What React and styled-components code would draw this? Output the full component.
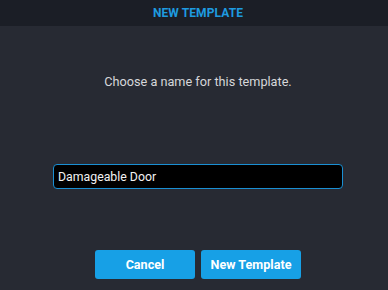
import React from "react";
import styled, { createGlobalStyle } from "styled-components";

const GlobalStyle = createGlobalStyle`
  html, body {
    margin: 0;
    padding: 0;
    background: #272a33;
    font-family: Roboto, "Liberation Sans", sans-serif;
  }
`;

const Dialog = styled.div`
  width: 388px;
  height: 290px;
  display: flex;
  flex-direction: column;
  background: #272a33;
  overflow: hidden;
`;

const Header = styled.div`
  height: 26px;
  flex: none;
  background: #1b1e26;
  display: flex;
  align-items: center;
  justify-content: center;
  padding-left: 8px;
  color: #1e9be0;
  font-weight: 700;
  font-size: 12px;
  letter-spacing: 0.1px;
`;

const Body = styled.div`
  flex: 1;
  display: flex;
  flex-direction: column;
  align-items: center;
  padding: 48px 45px 11px 53px;
`;

const Message = styled.p`
  margin: 0;
  font-size: 12.7px;
  line-height: 16px;
  color: #d6d7da;
`;

const NameInput = styled.input`
  box-sizing: border-box;
  margin-top: 74px;
  width: 290px;
  height: 25px;
  padding: 0 4px;
  background: #000;
  border: 1px solid #1a8fd3;
  border-radius: 4px;
  color: #f2f2f2;
  font-family: inherit;
  font-size: 12.3px;
  outline: none;
`;

const Actions = styled.div`
  margin-top: auto;
  display: flex;
  gap: 6px;
`;

const Button = styled.button`
  width: 100px;
  height: 29px;
  border: none;
  border-radius: 3px;
  background: #17a0e6;
  color: #fff;
  font-family: inherit;
  font-weight: 700;
  font-size: 12.6px;
  cursor: pointer;
`;

export default function App() {
  return (
    <>
      <GlobalStyle />
      <Dialog>
        <Header>NEW TEMPLATE</Header>
        <Body>
          <Message>Choose a name for this template.</Message>
          <NameInput defaultValue="Damageable Door" />
          <Actions>
            <Button>Cancel</Button>
            <Button>New Template</Button>
          </Actions>
        </Body>
      </Dialog>
    </>
  );
}
